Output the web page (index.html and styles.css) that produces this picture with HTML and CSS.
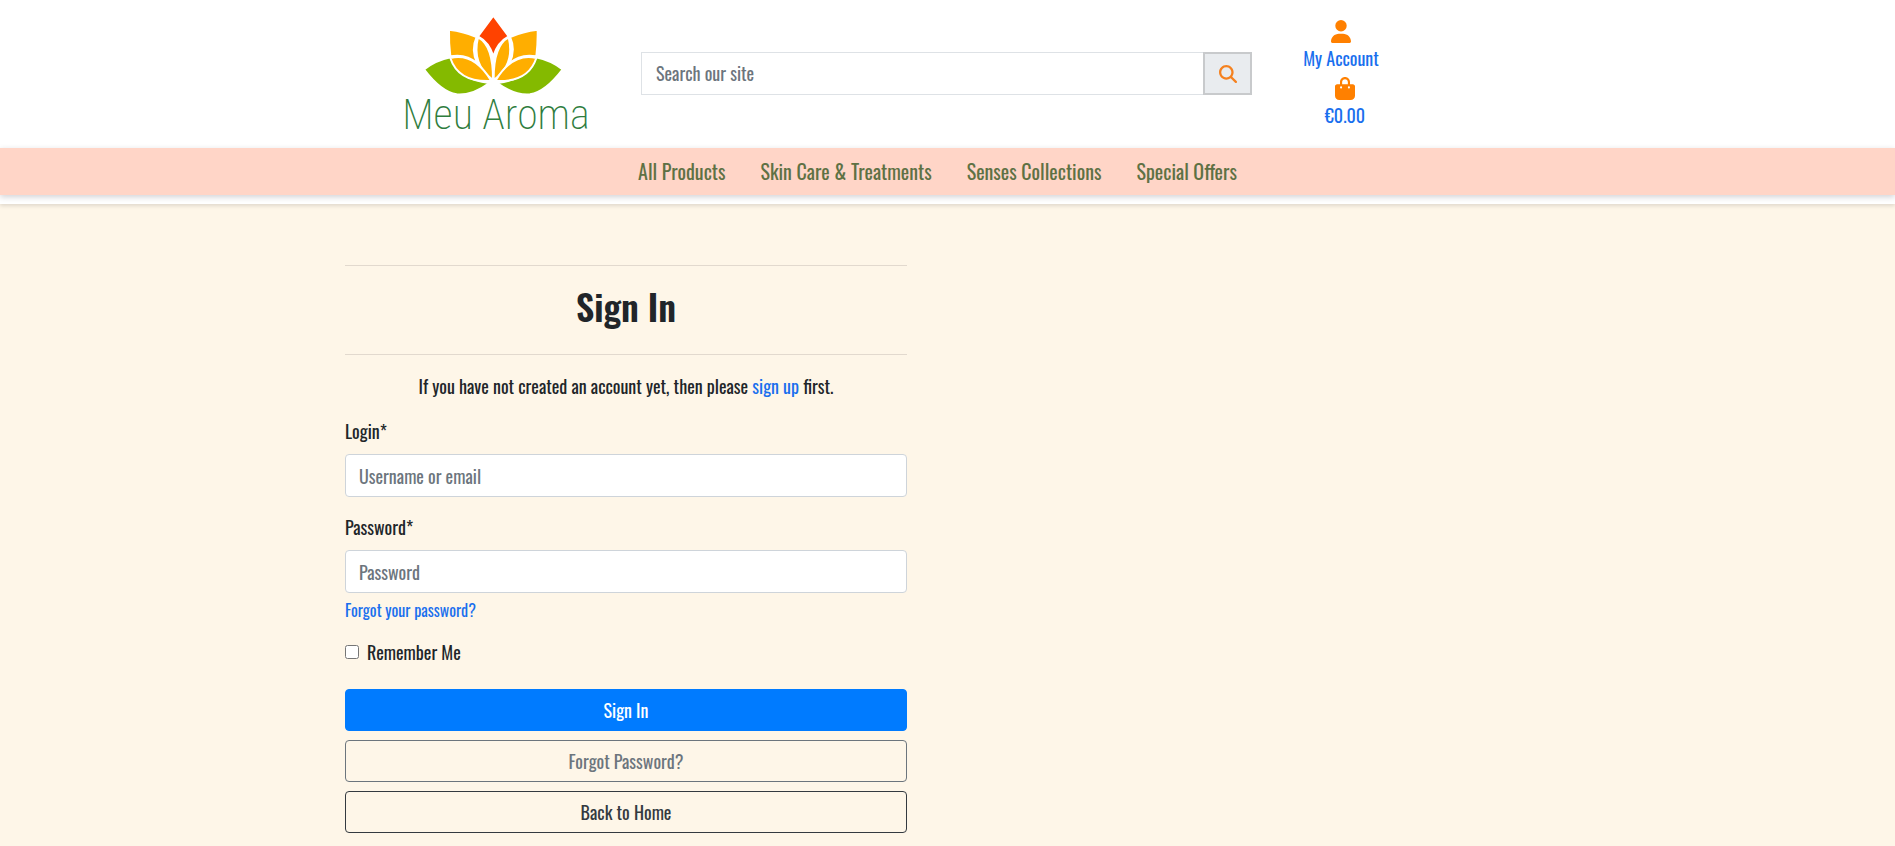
FILE: index.html
```html
<!DOCTYPE html>
<html lang="en">
<head>
<meta charset="utf-8">
<meta name="viewport" content="width=device-width, initial-scale=1">
<title>Meu Aroma - Sign In</title>
<link rel="stylesheet" href="styles.css">
</head>
<body>
<header class="site-header">
  <div class="header-inner">
    <a class="logo" href="#" aria-label="Meu Aroma">
      <svg viewBox="30 45 570 351" width="190" height="117">
        <g stroke="#fff" stroke-width="6" stroke-linejoin="round">
          <path fill="#84ba00" d="M102 208Q140 180 182 172Q205 238 298 249Q247 287 200 283Q154 276 102 208Z"/>
          <path fill="#84ba00" d="M518 208Q480 180 438 172Q415 238 322 249Q373 287 420 283Q466 276 518 208Z"/>
          <path fill="#ffae00" d="M177 89Q222 94 260 111Q242 150 262 190Q228 160 181 169Q176 130 177 89Z"/>
          <path fill="#ffae00" d="M443 89Q398 94 360 111Q378 150 358 190Q392 160 439 169Q444 130 443 89Z"/>
          <path fill="#ff4200" d="M310 47L356 109Q322 127 310 169Q298 127 264 109Z"/>
          <path fill="#ffae00" d="M264 112Q310 136 309 240Q244 194 264 112Z"/>
          <path fill="#ffae00" d="M356 112Q310 136 311 240Q376 194 356 112Z"/>
          <path fill="#ffae00" d="M181 174Q252 156 304 243Q205 248 181 174Z"/>
          <path fill="#ffae00" d="M439 174Q368 156 316 243Q415 248 439 174Z"/>
        </g>
        <text class="logo-text" x="318" y="386" text-anchor="middle">Meu Aroma</text>
      </svg>
    </a>
    <form class="search" role="search">
      <input class="search-input" type="search" placeholder="Search our site" aria-label="Search our site">
      <button class="search-button" type="button" aria-label="Search">
        <svg viewBox="0 0 512 512" width="18" height="18" fill="currentColor"><path d="M416 208c0 45.9-14.9 88.3-40 122.7L502.6 457.4c12.5 12.5 12.5 32.8 0 45.3s-32.8 12.5-45.3 0L330.7 376c-34.4 25.2-76.8 40-122.7 40C93.1 416 0 322.9 0 208S93.1 0 208 0S416 93.1 416 208zM208 352a144 144 0 1 0 0-288 144 144 0 1 0 0 288z"/></svg>
      </button>
    </form>
    <div class="account">
      <a class="account-link" href="#">
        <svg viewBox="0 0 448 512" width="20" height="23" fill="currentColor"><path d="M224 256A128 128 0 1 0 224 0a128 128 0 1 0 0 256zm-45.7 48C79.8 304 0 383.8 0 482.3C0 498.7 13.3 512 29.7 512H418.3c16.4 0 29.7-13.3 29.7-29.7C448 383.8 368.2 304 269.7 304H178.3z"/></svg>
        <span>My Account</span>
      </a>
      <a class="account-link bag-link" href="#">
        <svg viewBox="0 0 448 512" width="20" height="23" fill="currentColor"><path d="M160 112c0-35.3 28.7-64 64-64s64 28.7 64 64v48H160V112zm-48 48H48c-26.5 0-48 21.5-48 48V416c0 53 43 96 96 96H352c53 0 96-43 96-96V208c0-26.5-21.5-48-48-48H336V112C336 50.1 285.9 0 224 0S112 50.1 112 112v48zm24 48a24 24 0 1 1 0 48 24 24 0 1 1 0-48zm152 24a24 24 0 1 1 48 0 24 24 0 1 1 -48 0z"/></svg>
        <span>€0.00</span>
      </a>
    </div>
  </div>
  <nav class="main-nav">
    <a href="#">All Products</a>
    <a href="#">Skin Care &amp; Treatments</a>
    <a href="#">Senses Collections</a>
    <a href="#">Special Offers</a>
  </nav>
</header>
<main class="page">
  <section class="signin">
    <hr>
    <h1>Sign In</h1>
    <hr>
    <p class="intro">If you have not created an account yet, then please <a href="#">sign up</a> first.</p>
    <form>
      <div class="field">
        <label for="login">Login*</label>
        <input id="login" type="text" placeholder="Username or email">
      </div>
      <div class="field">
        <label for="password">Password*</label>
        <input id="password" type="password" placeholder="Password">
        <a class="hint" href="#">Forgot your password?</a>
      </div>
      <div class="remember">
        <input id="remember" type="checkbox">
        <label for="remember">Remember Me</label>
      </div>
      <div class="actions">
        <button class="btn btn-primary" type="button">Sign In</button>
        <a class="btn btn-secondary" href="#">Forgot Password?</a>
        <a class="btn btn-dark" href="#">Back to Home</a>
      </div>
    </form>
  </section>
</main>
</body>
</html>
```
FILE: styles.css
```css
* { box-sizing: border-box; }
body {
  margin: 0;
  background: #fef6e8;
  color: #212529;
  font-family: Oswald, "Roboto Condensed", "Liberation Sans Narrow", "Liberation Sans", sans-serif;
  font-size: 18px;
  font-weight: 400;
  line-height: 26px;
}
a { color: #1a6fee; text-decoration: none; }
svg { display: block; }
input, button { font: inherit; color: inherit; }
input::placeholder { color: #6c757d; opacity: 1; }

.site-header {
  background: #fff;
  padding-bottom: 9px;
  box-shadow: 0 2px 4px rgba(0, 0, 0, 0.12);
}
.header-inner {
  display: grid;
  grid-template-columns: 190px 1fr 76px;
  gap: 51px;
  align-items: center;
  max-width: 1095px;
  min-height: 148px;
  margin: 0 auto;
  padding: 0 116px 2px 0;
}
.logo svg { overflow: visible; }
.logo-text {
  font-family: "Roboto Condensed", "Liberation Sans Narrow", Lato, sans-serif;
  font-weight: 200;
  font-size: 126px;
  fill: #2f7d3e;
}
.search { display: flex; height: 43px; }
.search-input {
  flex: 1;
  min-width: 0;
  padding: 0 14px;
  border: 1px solid #dee2e6;
  border-right: 0;
  background: #fff;
  appearance: none;
}
.search-button {
  display: grid;
  place-items: center;
  width: 49px;
  padding: 2px 0 0;
  border: 2px solid #c8cacc;
  background: #e9ecef;
  color: #f58220;
}
.account { display: grid; gap: 6px; padding-top: 2px; }
.account-link {
  display: grid;
  justify-items: center;
  gap: 2px;
  white-space: nowrap;
}
.account-link svg { color: #ff8000; }
.bag-link { padding-left: 8px; }
.main-nav {
  display: flex;
  justify-content: center;
  gap: 35px;
  padding: 10px 20px 10px 0;
  background: #ffd5c7;
  box-shadow: 0 2px 6px rgba(0, 0, 30, 0.18);
  font-size: 20px;
  line-height: 27px;
}
.main-nav a { color: #5e7144; }

.page {
  display: grid;
  grid-template-columns: 1fr 1fr;
  gap: 81px;
  max-width: 1205px;
  margin: 0 auto;
  padding: 61px 0 12px;
}
hr { margin: 0; border: 0; border-top: 1px solid #e2d9ce; }
h1 {
  margin: 0;
  padding: 18px 0 26px;
  font-size: 36px;
  font-weight: 600;
  line-height: 44px;
  text-align: center;
}
.intro { margin: 18px 0 19px; text-align: center; }
.field { display: grid; margin-bottom: 17px; }
.field label { margin-bottom: 10px; }
.field input {
  width: 100%;
  height: 43px;
  padding: 0 13px;
  border: 1px solid #ced4da;
  border-radius: 4px;
  background: #fff;
}
.hint { margin-top: 5px; font-size: 16px; line-height: 24px; }
.remember { display: flex; align-items: center; gap: 8px; margin-bottom: 24px; }
.remember input { width: 14px; height: 14px; margin: 0; }
.actions { display: grid; gap: 9px; }
.btn {
  padding: 7px 12px;
  border: 1px solid;
  border-radius: 4px;
  background: transparent;
  line-height: 26px;
  text-align: center;
}
.btn-primary { border-color: #007bff; background: #007bff; color: #fff; }
.btn-secondary { border-color: #6c757d; color: #6c757d; }
.btn-dark { border-color: #343a40; color: #343a40; }
```
